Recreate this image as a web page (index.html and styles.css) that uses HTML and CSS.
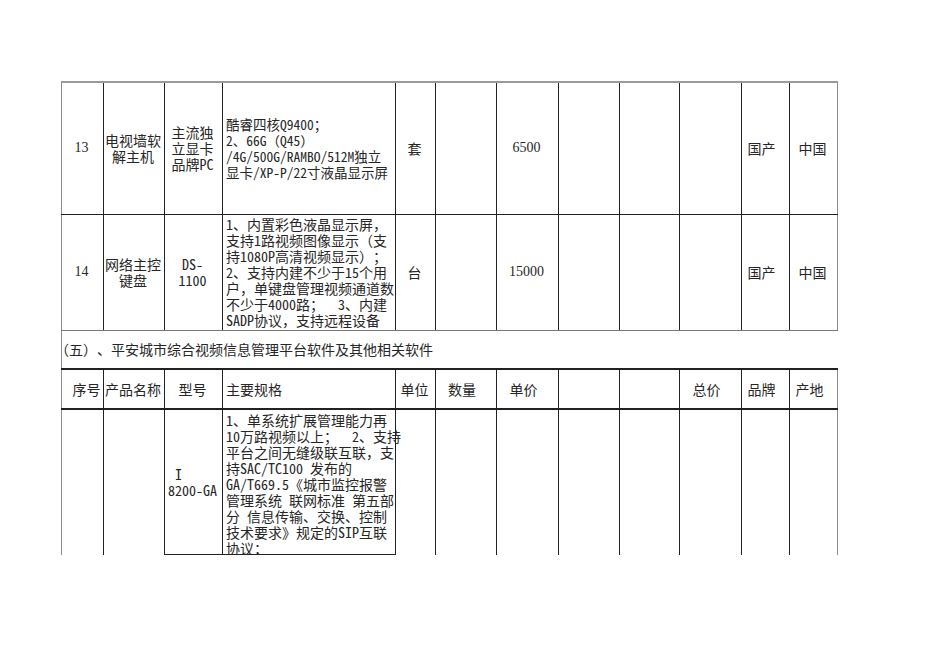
FILE: index.html
```html
<!DOCTYPE html>
<html lang="zh-CN">
<head>
<meta charset="utf-8">
<title>平安城市综合视频信息管理平台</title>
<link rel="stylesheet" href="styles.css">
</head>
<body>
<div class="page">
<table class="sheet">
<colgroup>
<col class="w42"><col class="w61"><col class="w58"><col class="w173"><col class="w40"><col class="w61">
<col class="w62"><col class="w61"><col class="w60"><col class="w62"><col class="w48"><col class="w48">
</colgroup>
<tr class="r13">
<td class="edge-l num">13</td>
<td>电视墙软<br>解主机</td>
<td>主流独<br>立显卡<br>品牌PC</td>
<td class="spec small">酷睿四核Q9400；<br>2、66G（Q45）<br>/4G/500G/RAMBO/512M独立<br>显卡/XP-P/22寸液晶显示屏</td>
<td>套</td>
<td></td>
<td class="num">6500</td>
<td></td>
<td></td>
<td></td>
<td class="hl">国产</td>
<td class="edge-r">中国</td>
</tr>
<tr class="r14">
<td class="edge-l num">14</td>
<td>网络主控<br>键盘</td>
<td>DS-<br>1100</td>
<td class="spec">1、内置彩色液晶显示屏，<br>支持1路视频图像显示（支<br>持1080P高清视频显示）；<br>2、支持内建不少于15个用<br>户，单键盘管理视频通道数<br>不少于4000路；&nbsp;&nbsp;3、内建<br>SADP协议，支持远程设备</td>
<td>台</td>
<td></td>
<td class="num">15000</td>
<td></td>
<td></td>
<td></td>
<td class="hl">国产</td>
<td class="edge-r">中国</td>
</tr>
<tr class="rsec">
<td class="sec" colspan="12"><span class="sec-text">（五）、平安城市综合视频信息管理平台软件及其他相关软件</span></td>
</tr>
<tr class="rhdr">
<td class="edge-l hr">序号</td>
<td>产品名称</td>
<td>型号</td>
<td class="spec">主要规格</td>
<td>单位</td>
<td class="hl">数量</td>
<td class="hl">单价</td>
<td></td>
<td></td>
<td class="hl">总价</td>
<td class="hl">品牌</td>
<td class="edge-r hl">产地</td>
</tr>
<tr class="rlast">
<td class="edge-l"></td>
<td></td>
<td class="closed"><span class="model-i">I</span><br>8200-GA</td>
<td class="spec top closed"><div class="spill">1、单系统扩展管理能力再<br>10万路视频以上；&nbsp;&nbsp;2、支持<br>平台之间无缝级联互联，支<br>持SAC/TC100 发布的<br>GA/T669.5《城市监控报警<br>管理系统 联网标准 第五部<br>分 信息传输、交换、控制<br>技术要求》规定的SIP互联<br>协议；</div></td>
<td></td>
<td></td>
<td></td>
<td></td>
<td></td>
<td></td>
<td></td>
<td class="edge-r"></td>
</tr>
</table>
</div>
</body>
</html>
```
FILE: styles.css
```css
html, body {
  margin: 0;
  padding: 0;
  background: #ffffff;
}

.page {
  padding: 81px 0 0 61px;
}

.sheet {
  border-collapse: collapse;
  table-layout: fixed;
  width: 776px;
  font-family: "Noto Sans Mono CJK SC", "Noto Sans CJK SC", "Liberation Serif", monospace;
  font-size: 14px;
  line-height: 16px;
  color: #262626;
  text-spacing-trim: space-all;
}

.w42 { width: 42px; }
.w61 { width: 61px; }
.w58 { width: 58px; }
.w173 { width: 173px; }
.w40 { width: 40px; }
.w62 { width: 62px; }
.w60 { width: 60px; }
.w48 { width: 48px; }

.sheet td {
  border: 1px solid #222;
  padding: 0 2px 0 0;
  text-align: center;
  vertical-align: middle;
  white-space: nowrap;
  overflow: visible;
}

.sheet td.num {
  font-family: "Liberation Serif", serif;
}

.sheet td.spec {
  text-align: left;
  padding: 0 0 0 3px;
}

.sheet td.small {
  font-size: 13.5px;
}

.sheet td.hl {
  padding-right: 8px;
}

.sheet td.hr {
  padding-left: 8px;
  padding-right: 0;
}

.sheet td.edge-l {
  border-left: 1px solid #8c8c8c;
}

.sheet td.edge-r {
  border-right: 1px solid #8c8c8c;
}

.r13 { height: 132px; }
.r14 { height: 116px; }
.rsec { height: 39px; }
.rhdr { height: 40px; }
.rlast { height: 144px; }

.r13 td {
  border-top: 2px solid #9a9a9a;
}

.r14 td {
  border-bottom: 1px solid #777;
}

.sheet td.sec {
  text-align: left;
  padding: 0;
  border-left: 1px solid #8c8c8c;
  border-right: none;
  border-top: 1px solid #888;
}

.sec-text {
  display: inline-block;
  margin-left: -7px;
}

.rhdr td {
  border-top: 2px solid #222;
  border-bottom: 2px solid #222;
}

.rlast td {
  border-bottom: none;
}

.rlast td.closed {
  border-bottom: 1px solid #222;
}

.sheet td.top {
  vertical-align: top;
}

.spill {
  height: 142px;
  padding-top: 2px;
  overflow: visible;
}

.model-i {
  display: inline-block;
  margin-right: 28px;
}
```
